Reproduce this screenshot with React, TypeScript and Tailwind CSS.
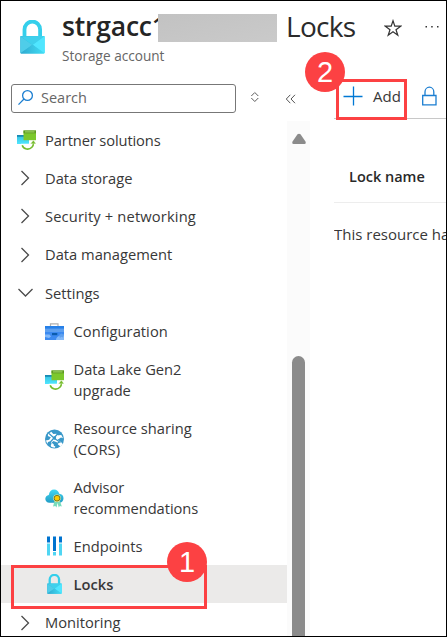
import React from "react";

const LockIcon = ({ id, className }: { id: string; className: string }) => (
  <svg viewBox="0 0 25 34" preserveAspectRatio="none" className={className}>
    <defs>
      <linearGradient id={id} x1="0" y1="0" x2="1" y2="0">
        <stop offset="0" stopColor="#2fa9cf" />
        <stop offset="1" stopColor="#42def5" />
      </linearGradient>
    </defs>
    <path d="M4.500 18V9.500a7.800 8 0 0 1 15.600 0V18" fill="none" stroke="#35cfeb" strokeWidth="3.800" />
    <rect x="0.300" y="16" width="24.400" height="17.400" rx="0.800" fill={`url(#${id})`} />
    <path d="M.3 16.300 12.500 25 .3 33.200z" fill="#4fcde9" />
    <path d="M.3 16.300h24.400L12.500 25z" fill="#3fd0ec" />
    <path d="M24.700 16.300 12.500 25l12.200 8.200z" fill="#50e6ff" />
    <path d="M.5 33.400 12.500 24.600l12 8.800z" fill={`url(#${id})`} />
  </svg>
);

const UpgradeIcon = ({ id }: { id: string }) => (
  <svg viewBox="0 0 20 20" className="size-5">
    <defs>
      <linearGradient id={id} x1="0" y1="0" x2="0" y2="1">
        <stop offset="0" stopColor="#32bedd" />
        <stop offset="1" stopColor="#50e6ff" />
      </linearGradient>
    </defs>
    <rect x="1" y="5" width="12" height="9" fill={`url(#${id})`} />
    <rect x="1" y="5" width="7" height="1.800" fill="#198ab3" />
    <rect x="7.500" y="0.500" width="12.500" height="9.700" fill="#7cc82c" />
    <rect x="7.500" y="0.500" width="12.500" height="2.800" fill="#5e9624" />
    <rect x="9" y="1.400" width="9.500" height="1" fill="#a8df67" />
    <path d="M4.800 13.800h7.700l5-2v3.200c-.8 3-3.200 4.600-6.200 4.600s-5.500-2.300-6.500-5.800z" fill="#fff" />
    <path d="M6.200 15.200c1.500 4.300 6.600 5.200 9.700 2.100 1.100-1.100 1.600-2.600 1.600-4.300" fill="none" stroke="#76bc2d" strokeWidth="1.600" />
    <path d="m14.400 13.800 3-3.500 2.600 3.500z" fill="#76bc2d" stroke="#fff" strokeWidth="0.300" />
  </svg>
);

const ToolboxIcon = () => (
  <svg viewBox="0 0 20 20" className="size-5">
    <path d="M6.500 5V1.800h7.500V5" fill="none" stroke="#b0b0b0" strokeWidth="1.200" />
    <rect x="1" y="4" width="19" height="14" fill="#5ea0ef" />
    <rect x="1" y="4" width="19" height="2.600" fill="#2680e8" />
    <rect x="1" y="10" width="19" height="8" fill="#3c8af0" />
    <path d="M1 12.500h4.500l1.500 2-2 1.500-4-1zM12 18c.2-2.300 1.700-3.800 3.700-3.900L20 12.500V18z" fill="#83b9f9" />
    <path d="m15 13 2.500-1.500L20 13l-1 2.500-2-.8-1 1.500z" fill="#5ea0ef" />
    <rect x="8" y="11" width="5.300" height="2.200" fill="#0b5cad" />
  </svg>
);

const CorsIcon = () => (
  <svg viewBox="0 0 20 20" className="size-5">
    <circle cx="10.500" cy="10" r="9.500" fill="#3998c9" />
    <path d="M4 5.200 7.300 2.800l2 2.300 3.400-.4 1.800 1.600 2.800-.3 1.700 3.200-2-.7-3.500 2.300 3.800 2.400 1.500 2-2.300 2.300-2.500-2-1.200-2.300-3.300-1.200-2 1.600 3.800 3.300-.5 1.800-3.400-.8-1.200-2.900-3-.5-1.300-2.900 3.300-.9 1.600-2.500-2.900-1.200z" fill="#fff" />
    <path d="m5 4.500 5.500 5 6 4M14 4.500 5 14.500M10 16.800l5.500-4" fill="none" stroke="#3998c9" strokeWidth="1.200" />
    <circle cx="10.500" cy="9" r="1.700" fill="#3998c9" />
    <circle cx="5.500" cy="14.500" r="2" fill="#3998c9" />
    <circle cx="14.300" cy="4.500" r="1.800" fill="#3998c9" />
  </svg>
);

const AdvisorIcon = () => (
  <svg viewBox="0 0 20 20" className="size-5">
    <defs>
      <linearGradient id="cloud" x1="0" y1="0" x2="0" y2="1">
        <stop offset="0" stopColor="#43d8f3" />
        <stop offset="1" stopColor="#229cc5" />
      </linearGradient>
    </defs>
    <path d="M5.500 14.800c-2.700 0-4.200-1.700-4.200-4 0-2 1.500-3.500 3.500-3.800C5.200 3.500 7.300 1.500 10.100 1.500c2.700 0 4.500 1.700 5.100 4.200 2.700.1 4.300 2 4.300 4.500 0 2.600-1.700 4.600-4.400 4.600z" fill="url(#cloud)" />
    <path d="m10.700 12.500-1.700 6 2.300-.5 1.200 1.500 1-4.500 1.300 4.500 1-1.400 2 .4-2-6z" fill="#78dcbb" />
    <circle cx="13" cy="10.200" r="3.700" fill="#fff1a0" />
    <circle cx="13" cy="10.200" r="2.900" fill="#ffca00" stroke="#5f6c2b" strokeWidth="0.900" />
  </svg>
);

const EndpointsIcon = () => (
  <svg viewBox="0 0 20 20" className="size-5">
    <path d="M4.500.5v6M10.500.5v14.500M16.500.5v6" stroke="#0073cf" strokeWidth="3" />
    <path d="M4.500 7.500v12M10.500 16v3.500M16.500 7.500v12" stroke="#50d6f3" strokeWidth="3" />
  </svg>
);

const Chevron = ({ open = false }: { open?: boolean }) => (
  <svg viewBox="0 0 20 20" className="size-5" fill="none" stroke="#4b4b4b" strokeWidth="1.300">
    <path d={open ? "m2.500 6 7 7 7-7" : "m5.500 3 7 7-7 7"} />
  </svg>
);

const Row = ({ h, icon, children }: { h: string; icon: React.ReactNode; children: React.ReactNode }) => (
  <div className={`flex items-center gap-[9px] pl-[15px] ${h}`}>
    {icon}
    {children}
  </div>
);

const SubRow = ({ h, icon, children, active = false }: { h: string; icon: React.ReactNode; children: React.ReactNode; active?: boolean }) => (
  <div className={`flex items-center gap-[9.500px] pl-[43px] leading-[21px] ${h} ${active ? "bg-[#ebeae9] font-semibold" : ""}`}>
    {icon}
    <div>{children}</div>
  </div>
);

const Badge = ({ n, className }: { n: number; className: string }) => (
  <div className={`absolute flex size-10 items-center justify-center rounded-full bg-[#fc4143] font-['Liberation_Sans',sans-serif] text-[29px] leading-none text-white ${className}`}>
    {n}
  </div>
);

export default function App() {
  return (
    <div className="relative flex h-[637px] w-[447px] flex-col overflow-hidden border border-black bg-white font-['Open_Sans',sans-serif] text-[14.700px] text-[#383838]">
      <header className="flex h-[77px] shrink-0 pl-[19px]">
        <LockIcon id="lockHeader" className="mt-[19px] h-[34px] w-[25px] shrink-0" />
        <div className="ml-[17px] w-[96px] shrink-0 whitespace-nowrap">
          <div className="h-[45px] overflow-hidden text-[26.500px] leading-[50px] font-semibold text-[#252525]">
            <span className="tracking-[-0.200px]">strgacc1</span>
          </div>
          <div className="text-[13.600px] leading-[20px] text-[#666]">Storage account</div>
        </div>
        <div className="mt-[13px] h-7 w-[119px] shrink-0 bg-linear-to-br from-[#c2c2c2] to-[#cacaca]" />
        <div className="ml-[9px] w-[89px] shrink-0 text-[28px] leading-[50px] tracking-[-0.700px] text-[#2b2b2b]">Locks</div>
        <svg viewBox="0 0 18 18" className="mt-[18px] ml-[9px] size-[18px] shrink-0" fill="none" stroke="#333" strokeWidth="1.200">
          <path d="m9 1.800 1.800 5.400h5.900l-4.700 3.500 1.800 5.500L9 12.800l-4.800 3.400L6 10.700 1.300 7.200h5.900z" />
        </svg>
        <svg viewBox="0 0 14 4" className="mt-[24px] ml-[23px] h-1 w-[14px] shrink-0" fill="#333">
          <rect x="0.500" y="1" width="1.500" height="1.500" />
          <rect x="6.200" y="1" width="1.500" height="1.500" />
          <rect x="12" y="1" width="1.500" height="1.500" />
        </svg>
      </header>
      <div className="flex min-h-0 flex-1">
        <aside className="flex w-[309px] shrink-0 flex-col">
          <div className="flex h-[43px] shrink-0 pt-[6px] pl-[10px]">
            <div className="flex h-[29px] w-[225px] shrink-0 items-center rounded-[3px] border border-[#777] pb-[2px] pl-[5px] text-[14.500px] text-[#666]">
              <svg viewBox="0 0 18 18" className="mr-[6px] size-[18px]" fill="none" stroke="#1b7ed1" strokeWidth="1.300">
                <circle cx="10.500" cy="6.500" r="4.900" />
                <path d="M7 10 1.500 15.600" />
              </svg>
              Search
            </div>
            <svg viewBox="0 0 10 12" className="mt-[7px] ml-[14px] h-3 w-[10px]" fill="none" stroke="#5b5b5b">
              <path d="m1.300 5 3.500-3.500L8.300 5M1.300 7l3.500 3.500L8.300 7" />
            </svg>
            <svg viewBox="0 0 12 12" className="mt-[9px] ml-[25px] size-3" fill="none" stroke="#555">
              <path d="M5.300 1.800 1.300 6l4 4.200M10 1.800 6 6l4 4.200" />
            </svg>
          </div>
          <div className="flex min-h-0 flex-1">
            <nav className="w-[286px] shrink-0">
              <Row h="h-[38px]" icon={<UpgradeIcon id="upgradeA" />}><span className="tracking-[-0.120px]">Partner solutions</span></Row>
              <Row h="h-[38px]" icon={<Chevron />}>Data storage</Row>
              <Row h="h-[38px]" icon={<Chevron />}><span className="tracking-[0.150px]">Security + networking</span></Row>
              <Row h="h-[39px]" icon={<Chevron />}>Data management</Row>
              <Row h="h-[38px]" icon={<Chevron open />}>Settings</Row>
              <SubRow h="h-[39px]" icon={<ToolboxIcon />}><span className="tracking-[0.050px]">Configuration</span></SubRow>
              <SubRow h="h-[58px]" icon={<UpgradeIcon id="upgradeB" />}>Data Lake Gen2<br />upgrade</SubRow>
              <SubRow h="h-[59px]" icon={<CorsIcon />}>Resource sharing<br />(CORS)</SubRow>
              <SubRow h="h-[59px]" icon={<AdvisorIcon />}><span className="tracking-[-0.050px]">Advisor<br />recommendations</span></SubRow>
              <SubRow h="h-[38px]" icon={<EndpointsIcon />}>Endpoints</SubRow>
              <SubRow h="h-[38px]" active icon={<div className="flex w-5 justify-center"><LockIcon id="lockNav" className="h-5 w-[15px]" /></div>}>Locks</SubRow>
              <Row h="h-[39px]" icon={<Chevron />}>Monitoring</Row>
            </nav>
            <div className="flex w-[23px] flex-col items-center bg-[#fbfbfb] pt-[12px]">
              <svg viewBox="0 0 14 12" className="h-3 w-[14px] shrink-0" fill="#8b8b8b">
                <path d="M5.500 1.300Q7 0 8.500 1.300l5 7.200Q14.300 11 12.500 11h-11Q-.3 11 .5 8.500z" />
              </svg>
              <div className="mt-[211px] w-[13px] flex-1 rounded-t-full bg-[#8b8b8b]" />
            </div>
          </div>
        </aside>
        <main className="ml-[24px] min-w-0 flex-1 overflow-hidden whitespace-nowrap">
          <div className="flex h-[41px] items-start border-b border-[#c8c8c8] pt-[8px]">
            <svg viewBox="0 0 20 20" className="ml-[9px] size-5" fill="none" stroke="#0078d4" strokeWidth="1.300">
              <path d="M10.500.5v19M.5 10.500h19" />
            </svg>
            <span className="ml-[10px] w-[48px] text-[15px] leading-[21px]">Add</span>
            <svg viewBox="0 0 17 20" className="h-5 w-[17px]" fill="none" stroke="#1b7ed1" strokeWidth="1.300">
              <path d="M1.700 9.500h13.300v9.300H1.700zM4 9.500V6a4.400 4.800 0 0 1 8.800 0v3.500" />
            </svg>
          </div>
          <div className="flex h-[84px] items-end border-b border-[#ededed] pb-[14px] pl-[15px] text-[14.500px] font-semibold text-[#292929]">Lock name</div>
          <div className="pt-[20px] text-[15px]">This resource ha</div>
        </main>
      </div>
      <div className="absolute top-[78px] left-[335px] h-[41px] w-[71px] border-3 border-[#fc4143]" />
      <Badge n={2} className="top-[51px] left-[304px]" />
      <div className="absolute top-[564px] left-[10px] h-[44px] w-[196px] border-3 border-[#fc4143]" />
      <Badge n={1} className="top-[541px] left-[166px]" />
    </div>
  );
}
